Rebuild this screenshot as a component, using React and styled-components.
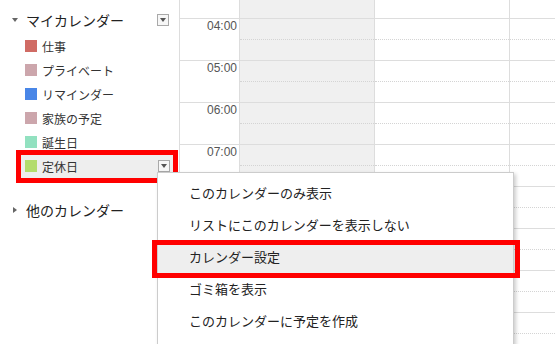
import React from 'react';
import styled, { createGlobalStyle } from 'styled-components';

const GlobalStyle = createGlobalStyle`
  body {
    margin: 0;
    background: #fff;
    font-family: 'Liberation Sans', 'Noto Sans CJK JP', sans-serif;
  }
`

const Page = styled.div`
  position: relative;
  display: flex;
  width: 555px;
  height: 344px;
  overflow: hidden;
  background: #fff;
`

const Sidebar = styled.div`
  box-sizing: border-box;
  flex: none;
  width: 180px;
  padding-top: 8px;
  border-right: 1px solid #ddd;
`

const SectionHeader = styled.div`
  display: flex;
  align-items: center;
  height: 24px;
  margin-top: ${p => p.$gap || 0}px;
  padding: 0 10px 0 12px;
  font-family: 'Noto Sans CJK JP', sans-serif;
  font-size: 14px;
  color: #222;
`

const Caret = styled.span`
  width: 0;
  height: 0;
  border-style: solid;
  ${p => p.$open
    ? `
    margin-right: 8px;
    border-width: 4px 3.5px 0 3.5px;
    border-color: #666 transparent transparent transparent;`
    : `
    margin: 0 9px 0 1px;
    border-width: 3.5px 0 3.5px 4px;
    border-color: transparent transparent transparent #666;`}
`

const DropButton = styled.span`
  box-sizing: border-box;
  display: flex;
  align-items: center;
  justify-content: center;
  width: 12px;
  height: 12px;
  margin-left: auto;
  border: 1px solid #a9a9a9;
  background: #f7f7f7;
  &::before {
    content: '';
    margin-top: -1px;
    border-style: solid;
    border-width: 4px 3px 0 3px;
    border-color: #555 transparent transparent transparent;
  }
`

const CalendarList = styled.div`
  margin-top: 2px;
`

const CalendarRow = styled.div`
  position: relative;
  box-sizing: border-box;
  display: flex;
  align-items: center;
  width: 152px;
  height: 24px;
  margin-left: 21px;
  padding: 0 3px 0 4px;
  background: ${p => (p.$active ? '#eee' : 'transparent')};
  font-family: 'Noto Sans CJK JP', sans-serif;
  font-size: 12px;
  color: #333;
  ${p => p.$marked && `
  &::after {
    content: '';
    position: absolute;
    top: -4px;
    bottom: -5px;
    left: -5px;
    right: -5px;
    border: 5px solid #f00;
  }`}
`

const Swatch = styled.span`
  flex: none;
  width: 12px;
  height: 12px;
  margin-right: 5px;
  background: ${p => p.$color};
`

const Grid = styled.div`
  flex: 1;
  display: flex;
  flex-direction: column;
`

const HourRow = styled.div`
  box-sizing: border-box;
  flex: none;
  display: flex;
  height: ${p => p.$height}px;
  border-top: ${p => (p.$partial ? 'none' : '1px solid #ddd')};
`

const TimeCell = styled.div`
  box-sizing: border-box;
  flex: none;
  width: 60px;
  padding-right: 2px;
  border-right: 1px solid #ddd;
  text-align: right;
  font-family: 'Liberation Sans', sans-serif;
  font-size: 12px;
  line-height: 14px;
  color: #555;
`

const DayCell = styled.div`
  box-sizing: border-box;
  flex: ${p => (p.$width ? 'none' : '1')};
  width: ${p => (p.$width ? `${p.$width}px` : 'auto')};
  display: flex;
  flex-direction: column;
  border-right: ${p => (p.$width ? '1px solid #ddd' : 'none')};
  background: ${p => (p.$shaded ? '#f0f0f0' : '#fff')};
`

const HalfSlot = styled.div`
  box-sizing: border-box;
  height: 21px;
  border-bottom: 1px dotted #d4d4d4;
`

const Menu = styled.ul`
  position: absolute;
  top: 172px;
  left: 157px;
  box-sizing: border-box;
  width: 357px;
  margin: 0;
  padding: 4px 0 8px;
  list-style: none;
  background: #fff;
  border: 1px solid #ccc;
  box-shadow: 2px 2px 4px rgba(0, 0, 0, 0.2);
  font-family: 'Noto Sans CJK JP', sans-serif;
  font-size: 13px;
  color: #222;
`

const MenuItem = styled.li`
  position: relative;
  height: 32px;
  padding-left: 31px;
  line-height: 32px;
  background: ${p => (p.$active ? '#eee' : 'transparent')};
  ${p => p.$marked && `
  &::after {
    content: '';
    position: absolute;
    top: -1px;
    bottom: -5px;
    left: -6px;
    right: -7px;
    border: 5px solid #f00;
  }`}
`

const calendars = [
  { name: '仕事', color: '#d06b64' },
  { name: 'プライベート', color: '#cca6ac' },
  { name: 'リマインダー', color: '#4986e7' },
  { name: '家族の予定', color: '#cca6ac' },
  { name: '誕生日', color: '#92e1c0' },
  { name: '定休日', color: '#b3dc6c', selected: true }
]

// labels under the open menu are not visible, so they are left blank
const hours = ['04:00', '05:00', '06:00', '07:00', '', '', '', '']

const days = [
  { width: 135, shaded: true },
  { width: 135 },
  {}
]

const menuItems = [
  'このカレンダーのみ表示',
  'リストにこのカレンダーを表示しない',
  'カレンダー設定',
  'ゴミ箱を表示',
  'このカレンダーに予定を作成'
]

export default function App () {
  return (
    <Page>
      <GlobalStyle />
      <Sidebar>
        <SectionHeader>
          <Caret $open />
          マイカレンダー
          <DropButton />
        </SectionHeader>
        <CalendarList>
          {calendars.map(cal => (
            <CalendarRow key={cal.name} $active={cal.selected} $marked={cal.selected}>
              <Swatch $color={cal.color} />
              {cal.name}
              {cal.selected && <DropButton />}
            </CalendarRow>
          ))}
        </CalendarList>
        <SectionHeader $gap={20}>
          <Caret />
          他のカレンダー
        </SectionHeader>
      </Sidebar>

      <Grid>
        <HourRow $height={18} $partial>
          <TimeCell />
          {days.map((d, i) => (
            <DayCell key={i} $width={d.width} $shaded={d.shaded} />
          ))}
        </HourRow>
        {hours.map((hour, h) => (
          <HourRow key={h} $height={42}>
            <TimeCell>{hour}</TimeCell>
            {days.map((d, i) => (
              <DayCell key={i} $width={d.width} $shaded={d.shaded}>
                <HalfSlot />
              </DayCell>
            ))}
          </HourRow>
        ))}
      </Grid>

      <Menu>
        {menuItems.map((label, i) => (
          <MenuItem key={label} $active={i === 2} $marked={i === 2}>
            {label}
          </MenuItem>
        ))}
      </Menu>
    </Page>
  )
}
